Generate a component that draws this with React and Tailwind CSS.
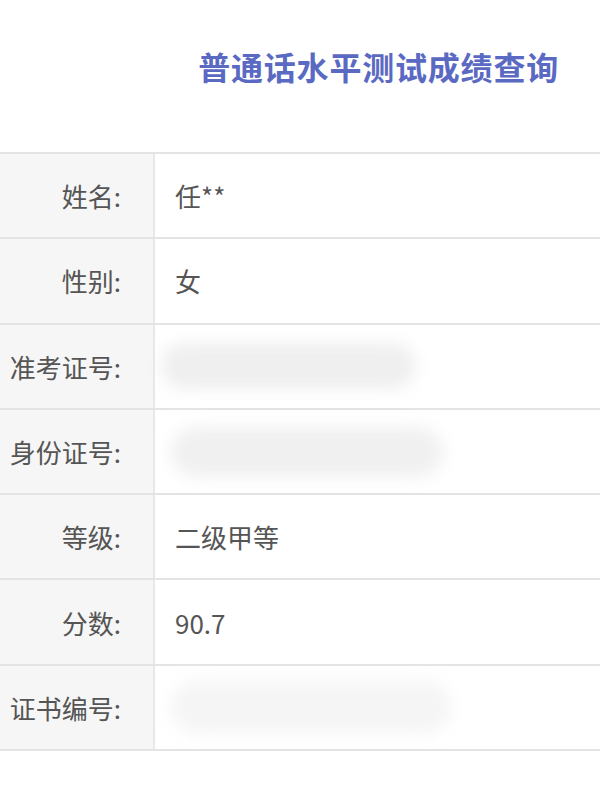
export default function App() {
  const rows = [
    { label: "姓名:", value: "任**" },
    { label: "性别:", value: "女" },
    { label: "准考证号:", blur: "-ml-[14px] w-[255px] h-[46px] bg-[#efefef]" },
    { label: "身份证号:", blur: "-ml-[4px] w-[272px] h-[50px] bg-[#f0f0f0]" },
    { label: "等级:", value: "二级甲等" },
    { label: "分数:", value: "90.7" },
    { label: "证书编号:", blur: "-ml-[4px] w-[280px] h-[52px] bg-[#f5f5f5]" },
  ];

  return (
    <div className="h-[785px] w-[600px] overflow-hidden bg-white font-['Noto_Sans_CJK_SC','Noto_Sans',sans-serif] text-[#555]">
      <div className="flex h-[152px] items-start justify-end pr-[41px] pt-[44px]">
        <h1 className="text-[32px] font-bold leading-[44px] tracking-[0.8px] text-[#5a69c2]">普通话水平测试成绩查询</h1>
      </div>

      <div className="border-t-2 border-[#e4e4e4]">
        {rows.map((r) => (
          <div key={r.label} className="flex h-[85.3px] border-b-2 border-[#e4e4e4]">
            <div className="flex w-[155px] shrink-0 items-center justify-end border-r-2 border-[#e8e8e8] bg-[#f6f6f6] pr-[32px] text-[26px]">
              {r.label}
            </div>
            <div className="flex flex-1 items-center pl-[20px] text-[26px]">
              {r.blur ? (
                <div className={`rounded-full blur-[8px] ${r.blur}`} />
              ) : (
                r.value
              )}
            </div>
          </div>
        ))}
      </div>
    </div>
  );
}
